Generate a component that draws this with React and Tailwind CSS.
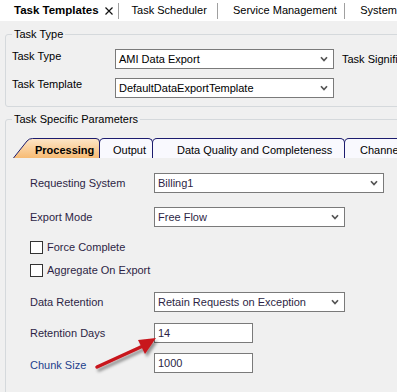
import React from 'react';

const Chevron = () => (
  <svg width="8" height="6" viewBox="0 0 8 6">
    <path d="M1 1.2 L4 4.5 L7 1.2" stroke="#555" strokeWidth="1.7" fill="none" />
  </svg>
);

function Combo({ text, className }) {
  return (
    <div className={`flex h-[20px] items-center justify-between border border-[#7a7a7a] bg-white pl-[3px] pr-[5px] ${className}`}>
      <span className="whitespace-nowrap">{text}</span>
      <Chevron />
    </div>
  );
}

function TextBox({ value }) {
  return (
    <div className="flex h-[20px] w-[99px] items-center border border-[#7a7a7a] bg-white pl-[3px]">
      {value}
    </div>
  );
}

function Check({ label }) {
  return (
    <div className="flex h-[13px] items-center">
      <div className="h-[13px] w-[13px] border border-[#333] bg-white" />
      <span className="ml-[4px]">{label}</span>
    </div>
  );
}

export default function App() {
  return (
    <div className="relative h-[392px] w-[397px] overflow-hidden bg-[#f0f0f0] font-['Liberation_Sans',Arial,sans-serif] text-[11px] leading-[13px] text-black">
      {/* document tabs */}
      <div className="flex h-[21px] items-center bg-white">
        <div className="flex w-[122px] items-center pl-[14px]">
          <span className="text-[11.5px] font-bold">Task Templates</span>
          <svg className="ml-[6px]" width="8" height="8" viewBox="0 0 8 8">
            <path d="M0.5 0.5 L7.5 7.5 M7.5 0.5 L0.5 7.5" stroke="#111" strokeWidth="1.2" />
          </svg>
        </div>
        <div className="h-[16px] w-px bg-[#a0a0a0]" />
        <div className="w-[102px] pl-[13px]">Task Scheduler</div>
        <div className="h-[16px] w-px bg-[#a0a0a0]" />
        <div className="w-[131px] pl-[15px] whitespace-nowrap">Service Management</div>
        <div className="h-[16px] w-px bg-[#a0a0a0]" />
        <div className="pl-[15px] whitespace-nowrap">System</div>
      </div>

      {/* Task Type group */}
      <fieldset className="ml-[5px] mt-[7px] w-[420px] rounded-[3px] border border-[#d5d9dc] p-0">
        <legend className="ml-[6px] px-[2px] leading-[13px]">Task Type</legend>
        <div className="mt-[8px] flex items-start pl-[6px]">
          <span className="w-[103px] pt-[1px]">Task Type</span>
          <Combo text="AMI Data Export" className="w-[219px]" />
          <span className="ml-[8px] self-center pt-[1px] whitespace-nowrap">Task Signifier</span>
        </div>
        <div className="mt-[9px] mb-[8px] flex items-start pl-[6px]">
          <span className="w-[103px] pt-[0px]">Task Template</span>
          <Combo text="DefaultDataExportTemplate" className="w-[219px]" />
        </div>
      </fieldset>

      {/* Task Specific Parameters group */}
      <fieldset className="ml-[5px] mt-[6px] w-[420px] rounded-[3px] border border-[#d5d9dc] p-0 pb-[40px]">
        <legend className="ml-[6px] px-[2px] leading-[13px]">Task Specific Parameters</legend>

        {/* inner tabs */}
        <div className="mt-[12px] flex h-[20px] items-end pl-[7px]">
          <div className="relative h-[20px] w-[87px]">
            <svg className="absolute inset-0" width="87" height="20" viewBox="0 0 87 20">
              <defs>
                <linearGradient id="proc" x1="0" y1="0" x2="0" y2="1">
                  <stop offset="0" stopColor="#fde6c8" />
                  <stop offset="1" stopColor="#f7bb74" />
                </linearGradient>
              </defs>
              <path d="M0.5 20 L14 3 Q16 0.5 19.5 0.5 L83 0.5 Q86.5 0.5 86.5 4 L86.5 20 Z" fill="url(#proc)" />
              <path d="M0.5 20 L14 3 Q16 0.5 19.5 0.5 L83 0.5 Q86.5 0.5 86.5 4 L86.5 20" fill="none" stroke="#1c1c6e" strokeWidth="1" />
            </svg>
            <div className="relative flex h-full items-center pl-[22px] pt-[4px] font-bold">Processing</div>
          </div>
          <div className="-ml-px flex h-[20px] w-[54px] items-center rounded-t-[5px] border-x border-t border-[#1c1c6e] bg-[#f9f9fe] pl-[13px] pt-[4px]">
            Output
          </div>
          <div className="-ml-px flex h-[20px] w-[193px] items-center rounded-t-[5px] border-x border-t border-[#1c1c6e] bg-[#f9f9fe] pl-[24px] pt-[4px] whitespace-nowrap">
            Data Quality and Completeness
          </div>
          <div className="-ml-px flex h-[20px] w-[80px] items-center rounded-t-[5px] border-x border-t border-[#1c1c6e] bg-[#f9f9fe] pl-[15px] pt-[4px] whitespace-nowrap">
            Channels
          </div>
        </div>

        {/* processing tab content */}
        <div className="pl-[24px] text-[#2d1f45]">
          <div className="mt-[15px] flex items-center">
            <span className="w-[124px]">Requesting System</span>
            <Combo text="Billing1" className="w-[230px]" />
          </div>
          <div className="mt-[14px] flex items-center">
            <span className="w-[124px]">Export Mode</span>
            <Combo text="Free Flow" className="w-[191px]" />
          </div>
          <div className="mt-[14px]">
            <Check label="Force Complete" />
          </div>
          <div className="mt-[10px]">
            <Check label="Aggregate On Export" />
          </div>
          <div className="mt-[15px] flex items-center">
            <span className="w-[124px]">Data Retention</span>
            <Combo text="Retain Requests on Exception" className="w-[191px]" />
          </div>
          <div className="mt-[11px] flex items-center">
            <span className="w-[124px]">Retention Days</span>
            <TextBox value="14" />
          </div>
          <div className="mt-[10px] flex items-center">
            <span className="w-[124px] pt-[4px] text-[#1c3f8c]">Chunk Size</span>
            <TextBox value="1000" />
          </div>
        </div>
      </fieldset>

      {/* annotation arrow */}
      <svg className="pointer-events-none absolute left-0 top-0" width="397" height="392" viewBox="0 0 397 392">
        <defs>
          <filter id="sh" x="-20%" y="-20%" width="140%" height="160%">
            <feDropShadow dx="2" dy="3" stdDeviation="1.5" floodColor="#000" floodOpacity="0.4" />
          </filter>
        </defs>
        <g filter="url(#sh)">
          <path d="M97 367 L143 346" stroke="#c8161d" strokeWidth="3.5" strokeLinecap="round" />
          <polygon points="156,338 138,340 145,354" fill="#c8161d" />
        </g>
      </svg>
    </div>
  );
}
